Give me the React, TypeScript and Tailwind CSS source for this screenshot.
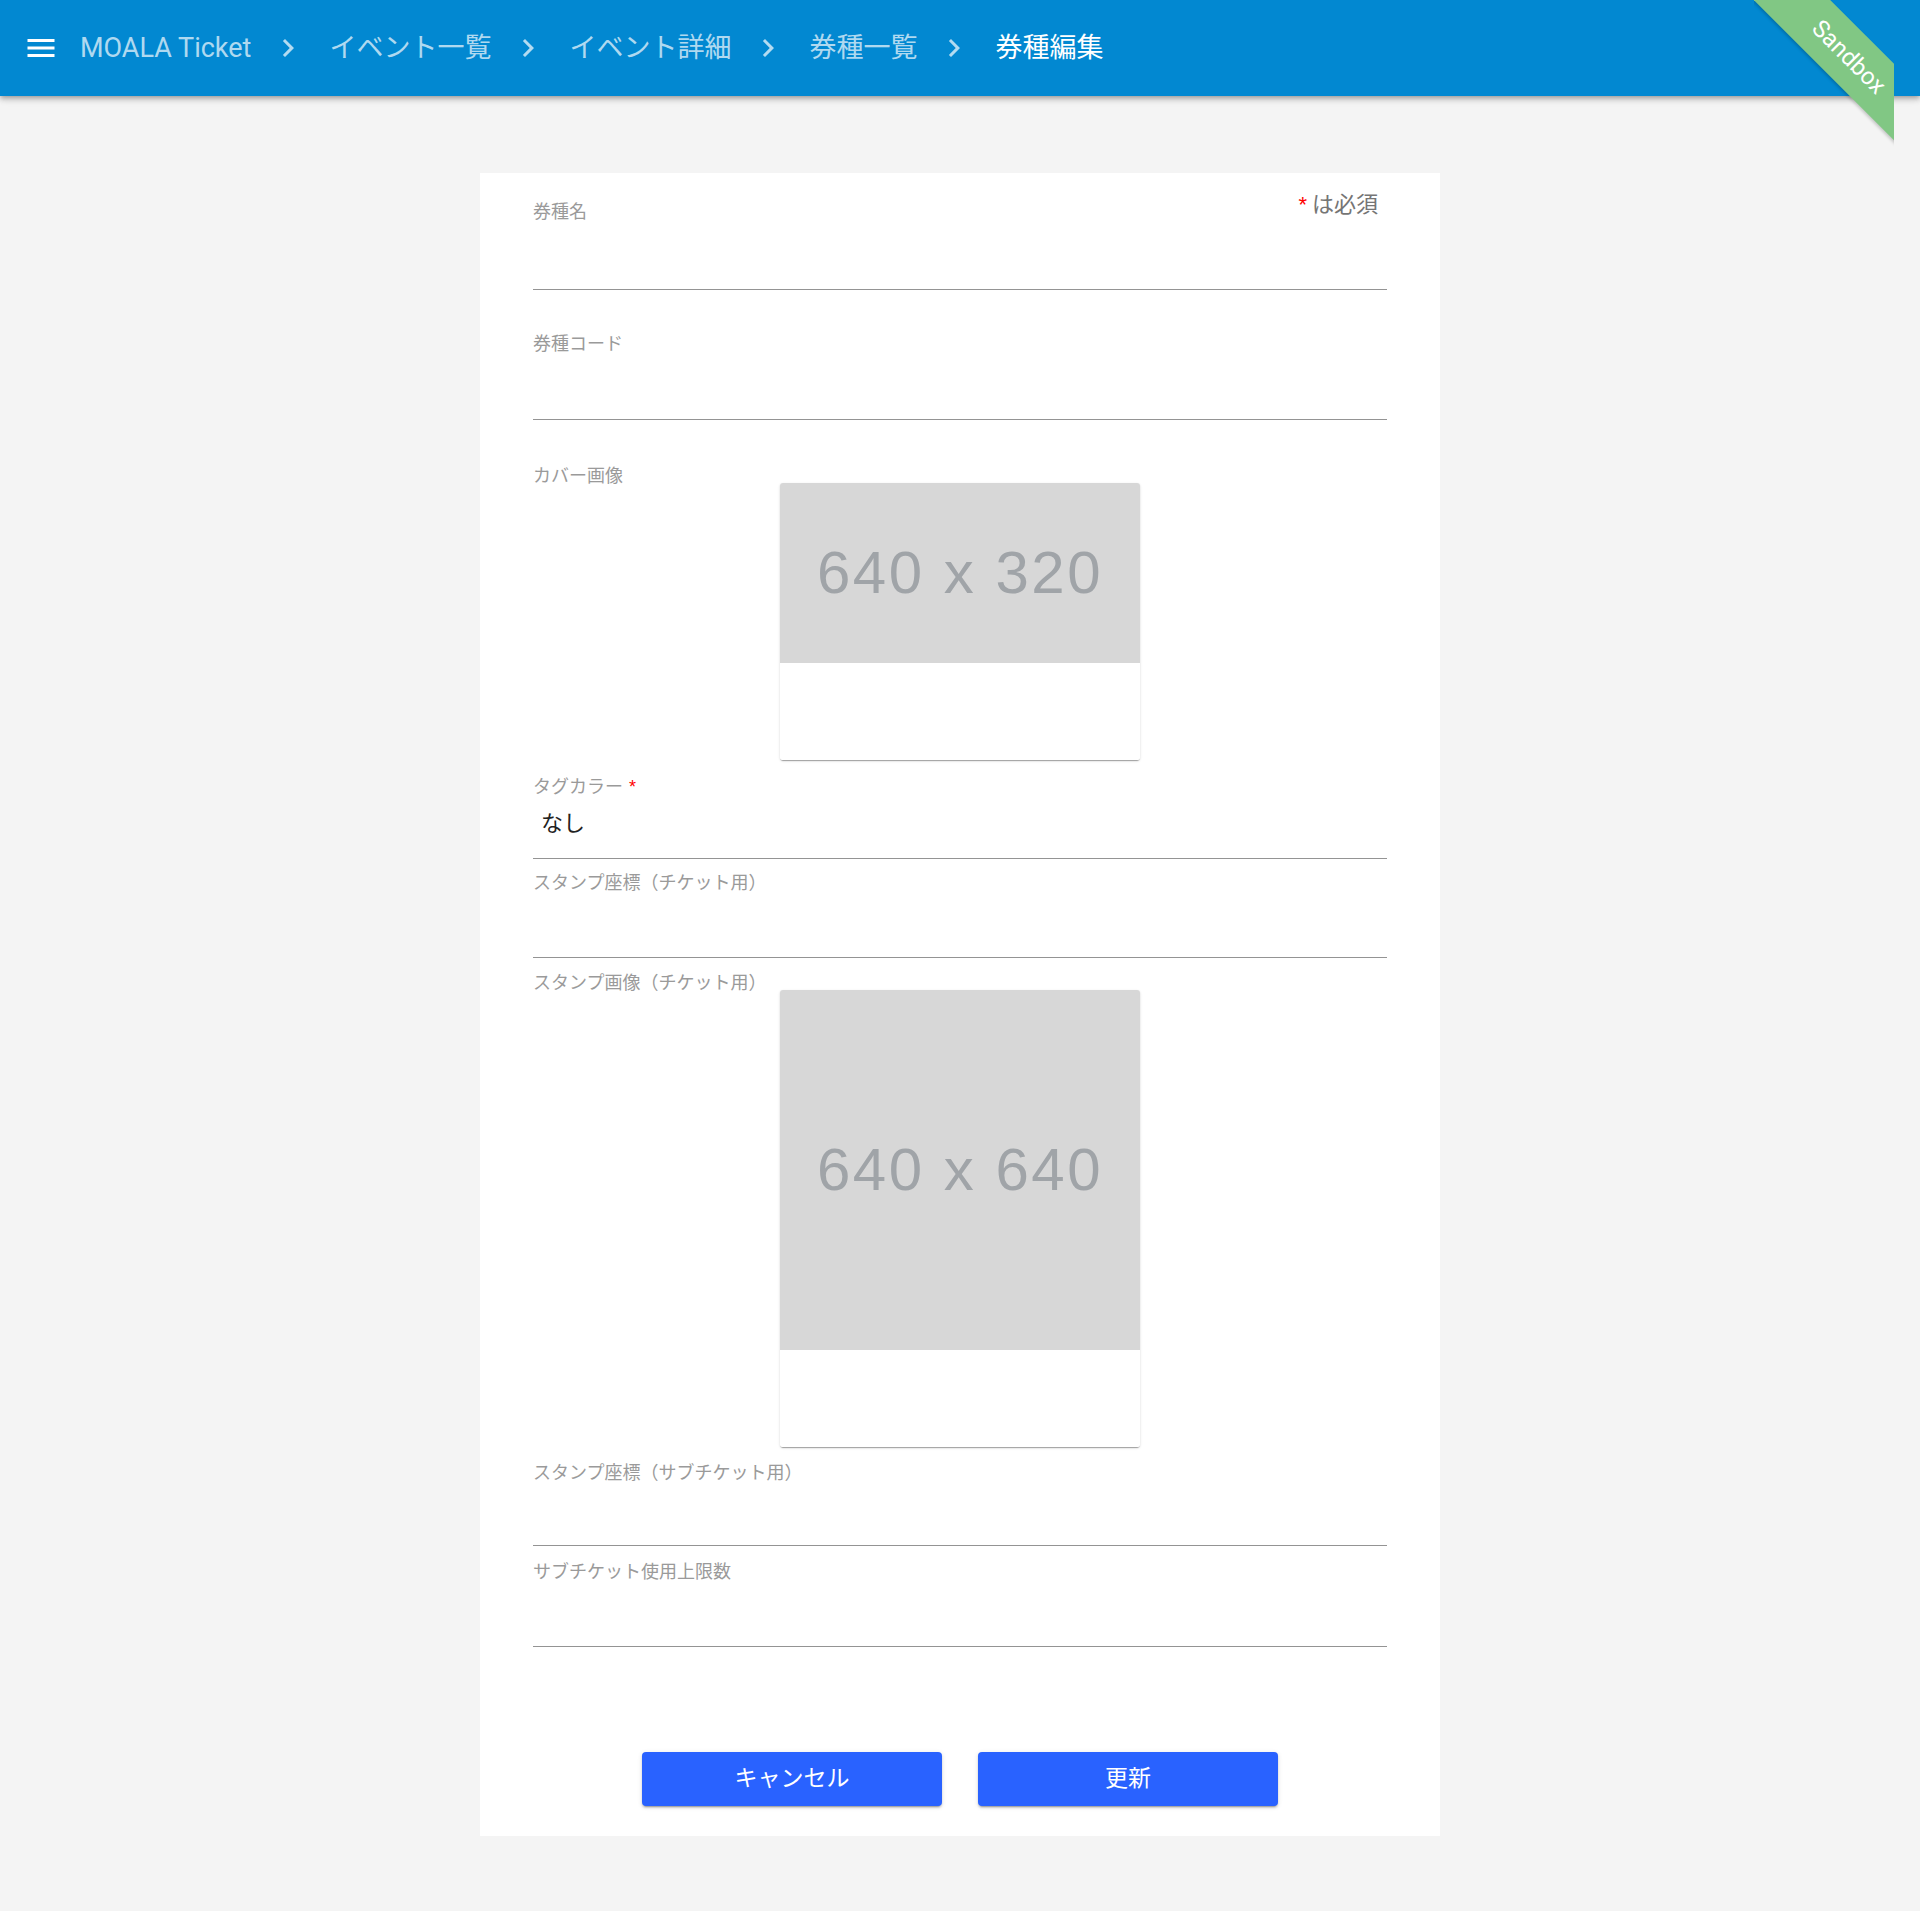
import React from "react";

const JP = "[font-family:'Noto_Sans_CJK_JP',sans-serif]";
const AST = "[font-family:'Liberation_Sans',Arial,sans-serif] text-[#ff0000]";

function Chevron() {
  return (
    <svg viewBox="0 0 24 24" className="w-[36px] h-[36px] ml-[19px] mr-[23px] shrink-0" fill="rgba(255,255,255,0.7)">
      <path d="M10 6L8.59 7.41 13.17 12l-4.58 4.59L10 18l6-6z" />
    </svg>
  );
}

function Label({ children, className = "" }: { children: React.ReactNode; className?: string }) {
  return (
    <div className={`text-[18px] leading-none h-[18px] text-[#9a9a9a] ${JP} whitespace-nowrap ${className}`}>
      {children}
    </div>
  );
}

function Placeholder({ tall, text }: { tall: boolean; text: string }) {
  return (
    <div className="ml-[247px] w-[360px] rounded-[3px] bg-white overflow-hidden shadow-[0px_2px_1px_-1px_rgba(0,0,0,0.2),0px_1px_1px_0px_rgba(0,0,0,0.14),0px_1px_3px_0px_rgba(0,0,0,0.12)]">
      <div
        className={`w-[360px] ${tall ? "h-[360px]" : "h-[180px]"} bg-[#d7d7d7] flex items-center justify-center text-[60px] tracking-[2.5px] text-[#a0a4a8] [font-family:'Liberation_Sans',Arial,sans-serif] leading-none`}
      >
        {text}
      </div>
      <div className="h-[97px] bg-white" />
    </div>
  );
}

export default function App() {
  return (
    <div className="relative min-h-screen bg-[#f4f4f4] overflow-hidden">
      {/* Header */}
      <header className="relative z-10 h-[96px] bg-[#0288d1] flex items-center pl-[23px] shadow-[0px_2px_4px_-1px_rgba(0,0,0,0.2),0px_4px_5px_0px_rgba(0,0,0,0.14),0px_1px_10px_0px_rgba(0,0,0,0.12)] [font-family:Roboto,'Noto_Sans_CJK_JP',sans-serif]">
        <svg viewBox="0 0 24 24" className="w-[36px] h-[36px] shrink-0" fill="#ffffff">
          <path d="M3 18h18v-2H3v2zm0-5h18v-2H3v2zm0-7v2h18V6H3z" />
        </svg>
        <span className="ml-[21px] text-[27px] leading-[32px] text-white/70 whitespace-nowrap">MOALA Ticket</span>
        <Chevron />
        <span className="text-[27px] leading-[32px] text-white/70 whitespace-nowrap">イベント一覧</span>
        <Chevron />
        <span className="text-[27px] leading-[32px] text-white/70 whitespace-nowrap">イベント詳細</span>
        <Chevron />
        <span className="text-[27px] leading-[32px] text-white/70 whitespace-nowrap">券種一覧</span>
        <Chevron />
        <span className="text-[27px] leading-[32px] text-white whitespace-nowrap">券種編集</span>
      </header>

      {/* Sandbox ribbon */}
      <div className="absolute z-20 top-0 right-[26px] w-[140px] h-[150px] overflow-hidden pointer-events-none">
        <div className="absolute left-[-45px] top-[29.5px] w-[280px] h-[54px] rotate-45 bg-[#81c784] flex items-center justify-center shadow-[0px_2px_3px_rgba(0,0,0,0.18)]">
          <span className="text-white text-[24px] leading-none [font-family:Roboto,sans-serif]">Sandbox</span>
        </div>
      </div>

      {/* Main */}
      <main className="pt-[77px] pb-[76px]">
        <div className="mx-auto w-[960px] bg-white pt-[18px] px-[53px] pb-[30px]">
          {/* Field 1 */}
          <div className="flex items-start justify-between">
            <Label className="mt-[10px]">券種名</Label>
            <div className={`pr-[9px] text-[22px] leading-none h-[22px] text-[#757575] ${JP} whitespace-nowrap`}>
              <span className={AST}>*</span> は必須
            </div>
          </div>
          <div className="h-[71px] border-b border-[#949494]" />

          {/* Field 2 */}
          <Label className="mt-[43px]">券種コード</Label>
          <div className="h-[69px] border-b border-[#949494]" />

          {/* Cover image */}
          <Label className="mt-[45px] h-[17px]">カバー画像</Label>
          <Placeholder tall={false} text="640 x 320" />

          {/* Tag color */}
          <Label className="mt-[16px]">
            タグカラー <span className={`${AST} ml-[2px]`}>*</span>
          </Label>
          <div className="h-[65px] border-b border-[#949494] pl-[8px] pt-[16px]">
            <div className={`text-[22px] leading-none text-[#222222] ${JP}`}>なし</div>
          </div>

          {/* Stamp coords */}
          <Label className="mt-[13px]">スタンプ座標（チケット用）</Label>
          <div className="h-[68px] border-b border-[#949494]" />

          {/* Stamp image */}
          <Label className="mt-[14px]">スタンプ画像（チケット用）</Label>
          <Placeholder tall={true} text="640 x 640" />

          {/* Sub ticket coords */}
          <Label className="mt-[15px]">スタンプ座標（サブチケット用）</Label>
          <div className="h-[66px] border-b border-[#949494]" />

          {/* Sub ticket limit */}
          <Label className="mt-[15px]">サブチケット使用上限数</Label>
          <div className="h-[68px] border-b border-[#949494]" />

          {/* Buttons */}
          <div className="mt-[105px] flex justify-center gap-[36px]">
            <button className={`w-[300px] h-[54px] pb-[6px] rounded-[4px] bg-[#2962ff] text-white text-[23px] leading-none ${JP} shadow-[0px_3px_1px_-2px_rgba(0,0,0,0.2),0px_2px_2px_0px_rgba(0,0,0,0.14),0px_1px_5px_0px_rgba(0,0,0,0.12)]`}>
              キャンセル
            </button>
            <button className={`w-[300px] h-[54px] pb-[6px] rounded-[4px] bg-[#2962ff] text-white text-[23px] leading-none ${JP} shadow-[0px_3px_1px_-2px_rgba(0,0,0,0.2),0px_2px_2px_0px_rgba(0,0,0,0.14),0px_1px_5px_0px_rgba(0,0,0,0.12)]`}>
              更新
            </button>
          </div>
        </div>
      </main>
    </div>
  );
}
